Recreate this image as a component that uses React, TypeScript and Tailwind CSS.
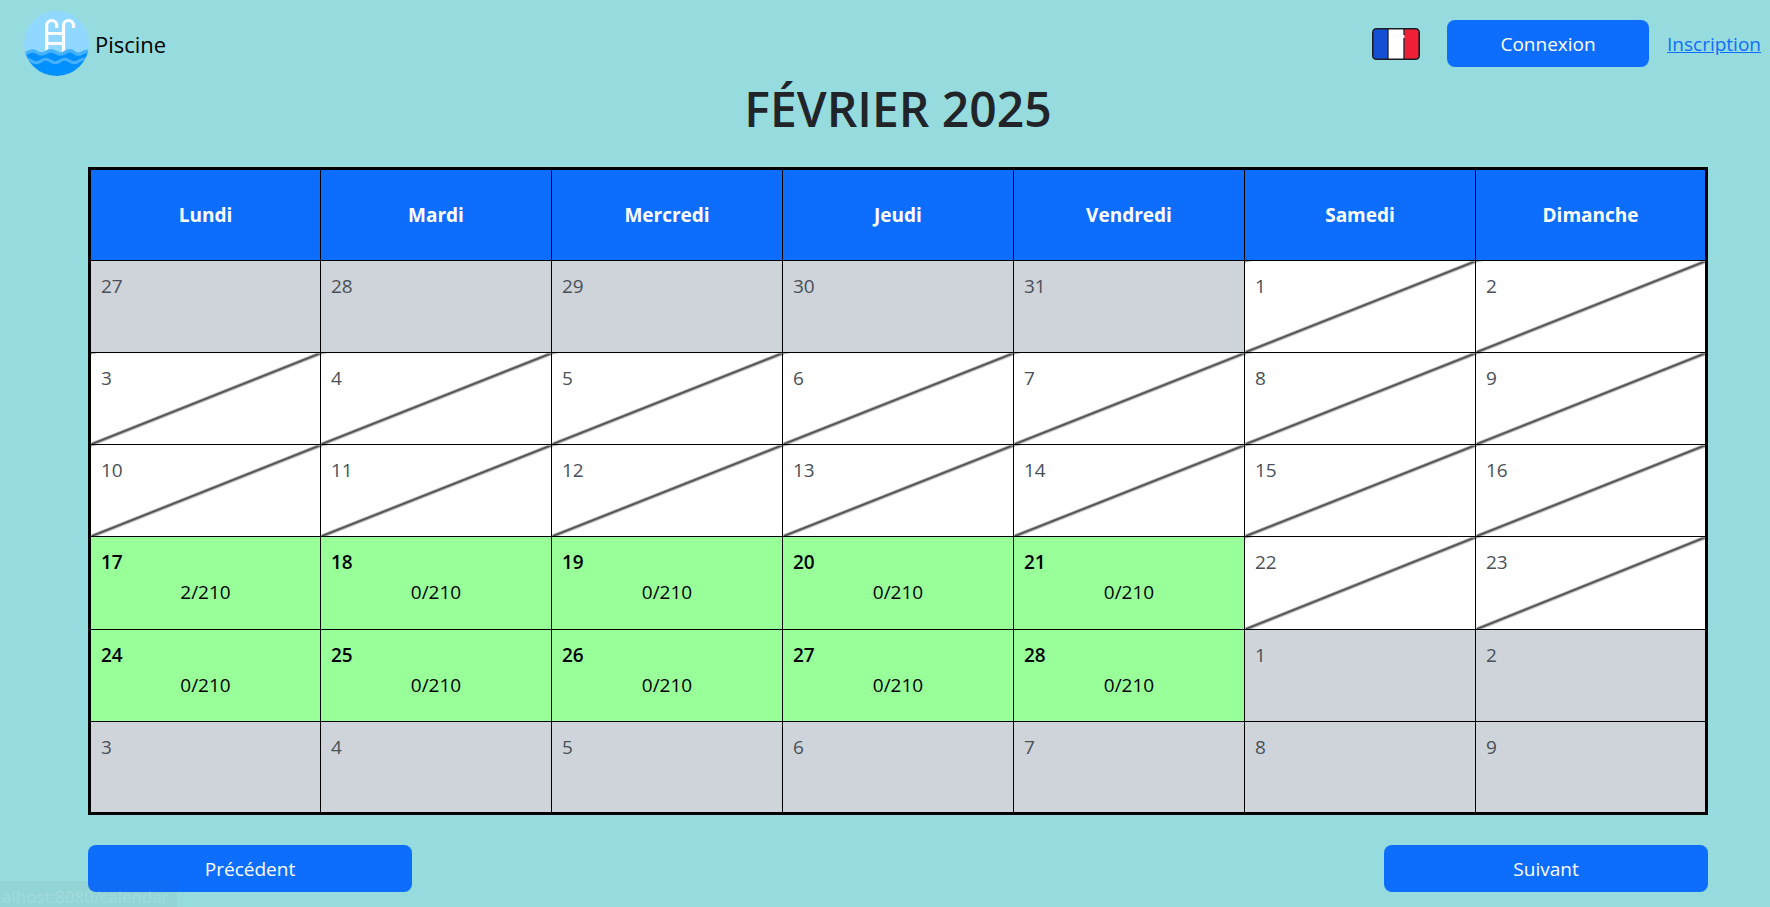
const weekDays = ["Lundi", "Mardi", "Mercredi", "Jeudi", "Vendredi", "Samedi", "Dimanche"];

type Kind = "out" | "closed" | "open";
type Day = { day: number; kind: Kind; count?: string };

const out = (day: number): Day => ({ day, kind: "out" });
const closed = (day: number): Day => ({ day, kind: "closed" });
const open = (day: number, booked = 0): Day => ({ day, kind: "open", count: `${booked}/210` });

const weeks: Day[][] = [
  [out(27), out(28), out(29), out(30), out(31), closed(1), closed(2)],
  [3, 4, 5, 6, 7, 8, 9].map(closed),
  [10, 11, 12, 13, 14, 15, 16].map(closed),
  [open(17, 2), open(18), open(19), open(20), open(21), closed(22), closed(23)],
  [open(24), open(25), open(26), open(27), open(28), out(1), out(2)],
  [3, 4, 5, 6, 7, 8, 9].map(out),
];

const kindClass: Record<Kind, string> = {
  out: "bg-[#ced4da] text-[#495057]",
  closed:
    "bg-white bg-[linear-gradient(to_top_left,transparent_calc(50%-2px),#444_50%,#444_calc(50%+1px),transparent_calc(50%+2px))] text-[#495057]",
  open: "bg-[#99ff99] text-black",
};

const buttonClass =
  "h-[47px] cursor-pointer rounded-lg bg-[#0d6efd] text-[19px] leading-7 text-white";

function Logo() {
  return (
    <svg viewBox="0 0 65 65" className="size-[65px]" aria-hidden="true">
      <defs>
        <clipPath id="disc">
          <circle cx="32.5" cy="32.5" r="32.5" />
        </clipPath>
      </defs>
      <g clipPath="url(#disc)">
        <rect width="65" height="65" fill="#90d8ff" />
        <g fill="none" stroke="#fff" strokeWidth="3.2">
          <path d="M22.700 44V14.500a5 5 0 0 1 10 0V17" />
          <path d="M39.500 44V14.500a5 5 0 0 1 10 0V17" />
          <path d="M22.700 22.500h16.800M22.700 32.500h16.800" />
        </g>
        <path
          d="M-4 43C0 43 2 42 5 40.500s5-1.500 8 .5 6 2 9 0 6-2.500 10 0 6 2 9 0 6-2.500 9 0 6 2 9 0 5-1.500 10 0V66H-4Z"
          fill="#0090ff"
        />
        <path
          d="M-4 43C0 43 2 42.500 5 41s5-1.500 8 .5 6 2 9 0 6-2.500 10 0 6 2 9 0 6-2.500 9 0 6 2 9 0 5-1.500 10 0"
          fill="none"
          stroke="#46b1ff"
          strokeWidth="3.500"
        />
        <path
          d="M-2 50c4-2.500 6-2.500 9.500 0s6 2.500 9.500 0 6-2.500 9.500 0 6 2.500 9.500 0 6-2.500 9.500 0 6 2.500 9.500 0 6-2.500 9.500 0"
          fill="none"
          stroke="#46b1ff"
          strokeWidth="3"
        />
      </g>
    </svg>
  );
}

function FrenchFlag() {
  return (
    <svg viewBox="0 0 48 32" className="h-8 w-12" aria-hidden="true">
      <rect x="1" y="1" width="46" height="30" rx="3.5" fill="#fff" />
      <path d="M16 1H4.500A3.500 3.500 0 0 0 1 4.500v23A3.500 3.500 0 0 0 4.500 31H16Z" fill="#1650d2" />
      <path d="M32 1h11.500A3.500 3.500 0 0 1 47 4.500v23a3.500 3.500 0 0 1-3.500 3.500H32Z" fill="#ee2036" />
      <path d="M16 1v30M32 1v6M32 10v21" stroke="#22222c" strokeWidth="1.300" />
      <path d="M31 7.500h1.500v2H31z" fill="#fff" />
      <rect x=".8" y=".8" width="46.400" height="30.400" rx="3.500" fill="none" stroke="#1c1d24" strokeWidth="1.600" />
    </svg>
  );
}

export default function App() {
  return (
    <div className="min-h-screen bg-[#96dbde] font-['Open_Sans','Noto_Sans',sans-serif] text-[19px] leading-[30px] text-[#212529]">
      <header className="flex items-center justify-between pt-[11px] pr-[9px] pl-6">
        <a href="#" className="flex items-center gap-[6px] text-[22px] text-black">
          <Logo />
          Piscine
        </a>
        <nav className="flex items-center">
          <button type="button" aria-label="Français" className="mr-[27px] cursor-pointer">
            <FrenchFlag />
          </button>
          <button type="button" className={`${buttonClass} mr-[18px] w-[202px]`}>
            Connexion
          </button>
          <a href="#" className="text-[#0d6efd] underline">
            Inscription
          </a>
        </nav>
      </header>

      <main className="pt-[3px] pr-[62px] pb-3 pl-[88px]">
        <h1 className="mb-7 text-center text-[48px] leading-[60px] font-semibold">FÉVRIER 2025</h1>

        <table className="h-[648px] w-full table-fixed border-collapse border-[3px] border-black">
          <thead>
            <tr className="h-[92px] bg-[#0d6efd] text-white">
              {weekDays.map((name) => (
                <th key={name} scope="col" className="border border-black font-bold">
                  {name}
                </th>
              ))}
            </tr>
          </thead>
          <tbody>
            {weeks.map((week, i) => (
              <tr key={i} className="h-[92px]">
                {week.map(({ day, kind, count }) => (
                  <td
                    key={day}
                    className={`border border-black px-[10px] pt-[10px] align-top ${kindClass[kind]}`}
                  >
                    <div className={kind === "open" ? "font-semibold" : ""}>{day}</div>
                    {count && <div className="text-center">{count}</div>}
                  </td>
                ))}
              </tr>
            ))}
          </tbody>
        </table>

        <div className="mt-[30px] flex justify-between">
          <button type="button" className={`${buttonClass} w-1/5`}>
            Précédent
          </button>
          <button type="button" className={`${buttonClass} w-1/5`}>
            Suivant
          </button>
        </div>
      </main>

      <div className="pointer-events-none fixed bottom-0 left-0 flex h-[26px] w-[177px] items-end bg-[#5a5a5a]/5 pl-0.5 text-[17px] leading-5 text-white/15">
        alhost:8080/calendar
      </div>
    </div>
  );
}
